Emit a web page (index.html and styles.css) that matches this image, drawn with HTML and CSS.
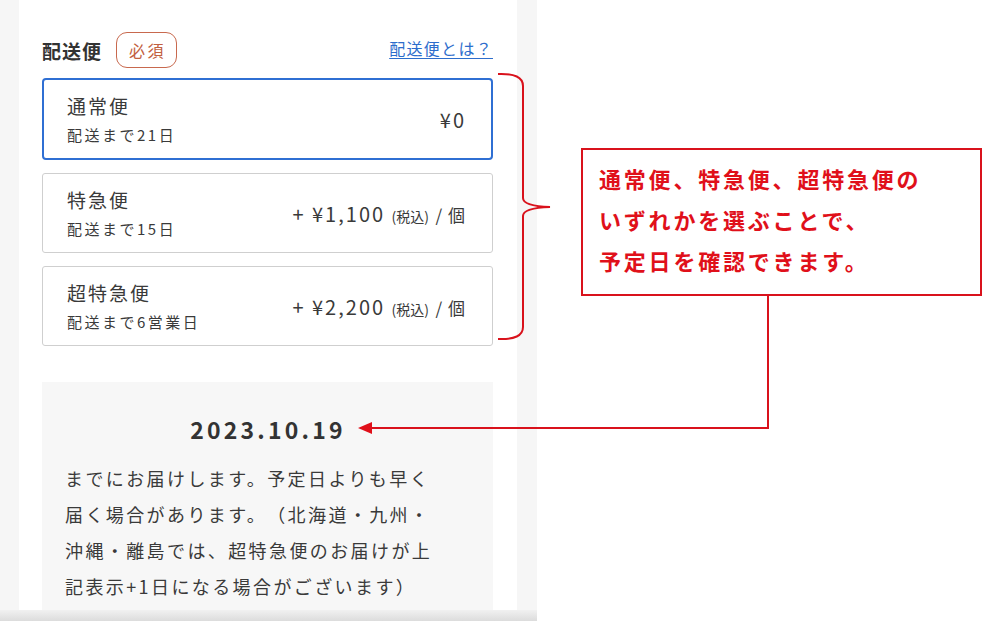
FILE: index.html
```html
<!DOCTYPE html>
<html lang="ja">
<head>
  <meta charset="UTF-8" />
  <meta name="viewport" content="width=device-width, initial-scale=1.0"/>
  <title>配送便の選択</title>
  <link rel="stylesheet" href="styles.css">
</head>
<body>
  <div class="stage">
    <div class="device">
      <div class="panel">
        <div class="field-head">
          <div class="field-title">
            <h2>配送便</h2>
            <span class="badge">必須</span>
          </div>
          <a class="help-link" href="#">配送便とは？</a>
        </div>

        <div class="options">
          <div class="card is-selected">
            <div class="card-info">
              <div class="card-name">通常便</div>
              <div class="card-days">配送まで21日</div>
            </div>
            <div class="card-price">¥0</div>
          </div>
          <div class="card">
            <div class="card-info">
              <div class="card-name">特急便</div>
              <div class="card-days">配送まで15日</div>
            </div>
            <div class="card-price">+ ¥1,100 <small>(税込)</small> <span class="unit">/ 個</span></div>
          </div>
          <div class="card">
            <div class="card-info">
              <div class="card-name">超特急便</div>
              <div class="card-days">配送まで6営業日</div>
            </div>
            <div class="card-price">+ ¥2,200 <small>(税込)</small> <span class="unit">/ 個</span></div>
          </div>
        </div>

        <div class="eta">
          <div class="eta-date">2023.10.19</div>
          <p class="eta-note">までにお届けします。予定日よりも早く届く場合があります。（北海道・九州・沖縄・離島では、超特急便のお届けが上記表示+1日になる場合がございます）</p>
        </div>
      </div>
      <div class="bottom-bar"></div>
    </div>

    <!-- annotation overlay -->
    <svg class="marks" width="982" height="621" viewBox="0 0 982 621">
      <path d="M498 74 Q523 73 523 86 L523 198 Q523 206 550 207 Q523 208 523 216 L523 327 Q523 340 498 339" />
      <path d="M768 296 L768 428 L370 428" />
      <polygon points="358,428 372,422 372,434" />
    </svg>
    <div class="note">通常便、特急便、超特急便の<br>いずれかを選ぶことで、<br>予定日を確認できます。</div>
  </div>
</body>
</html>
```

FILE: styles.css
```css
body {
  margin: 0;
  font-family: "Noto Sans CJK JP", "Noto Sans", sans-serif;
  color: #3a3a3a;
  background: #fff;
}
.stage {
  position: relative;
  width: 982px;
  height: 621px;
  overflow: hidden;
}
.device {
  position: relative;
  width: 537px;
  height: 621px;
  box-sizing: border-box;
  padding: 0 20px 0 19px;
  background-color: #f6f6f6;
}
.panel {
  height: 100%;
  box-sizing: border-box;
  padding: 32px 24px 0 23px;
  background-color: #fff;
}
.field-head {
  display: flex;
  justify-content: space-between;
  align-items: center;
  height: 36px;
}
.field-title {
  display: flex;
  align-items: center;
  gap: 14px;
}
.field-title h2 {
  margin: 0;
  font-size: 19px;
  font-weight: 700;
  letter-spacing: 1px;
  color: #333;
}
.badge {
  display: inline-flex;
  align-items: center;
  height: 36px;
  box-sizing: border-box;
  padding: 0 10px 0 12px;
  border: 1.5px solid #c8694e;
  border-radius: 11px;
  font-size: 16px;
  letter-spacing: 2.5px;
  color: #c2603f;
}
.help-link {
  font-size: 16px;
  letter-spacing: 1.3px;
  color: #2d6dcc;
  text-decoration: underline;
  text-underline-offset: 3px;
  margin-top: -4px;
}
.options {
  display: flex;
  flex-direction: column;
  gap: 13px;
  margin-top: 10px;
}
.card {
  display: flex;
  justify-content: space-between;
  align-items: center;
  height: 80px;
  box-sizing: border-box;
  padding: 0 26px 0 24px;
  border: 1.5px solid #cfcfcf;
  border-radius: 3px;
}
.card.is-selected {
  height: 82px;
  padding: 0 25px 0 23px;
  border: 2px solid #2f6fd3;
  border-radius: 4px;
}
.card-name {
  font-size: 19px;
  line-height: 26px;
  letter-spacing: 2px;
}
.card-days {
  margin-top: 6px;
  font-size: 15px;
  line-height: 20px;
  letter-spacing: 2.5px;
}
.card-price {
  font-size: 20px;
  letter-spacing: 2px;
}
.card-price small {
  font-size: 14px;
  letter-spacing: 0;
}
.card-price .unit {
  font-size: 17px;
  letter-spacing: 1px;
}
.eta {
  margin-top: 36px;
  padding: 31px 22px 40px 23px;
  background-color: #f7f7f7;
}
.eta-date {
  text-align: center;
  font-size: 23px;
  line-height: 32px;
  font-weight: 700;
  letter-spacing: 3.2px;
  color: #333;
}
.eta-note {
  max-width: 372px;
  margin: 15px 0 0;
  font-size: 18px;
  line-height: 36px;
  letter-spacing: 2.4px;
  text-spacing-trim: space-all;
}
.bottom-bar {
  position: absolute;
  left: 0;
  right: 0;
  bottom: 0;
  height: 11px;
  background: linear-gradient(#f1f1f1, #dcdcdc);
}
.marks {
  position: absolute;
  top: 0;
  left: 0;
}
.marks path {
  fill: none;
  stroke: #d9121c;
  stroke-width: 2;
}
.marks polygon {
  fill: #e0101a;
}
.note {
  position: absolute;
  left: 581px;
  top: 148px;
  width: 401px;
  height: 148px;
  box-sizing: border-box;
  padding: 8px 16px 0;
  border: 2px solid #d9121c;
  background: #fff;
  color: #e0101a;
  font-size: 22px;
  font-weight: 700;
  line-height: 41px;
  letter-spacing: 2.8px;
}
```
